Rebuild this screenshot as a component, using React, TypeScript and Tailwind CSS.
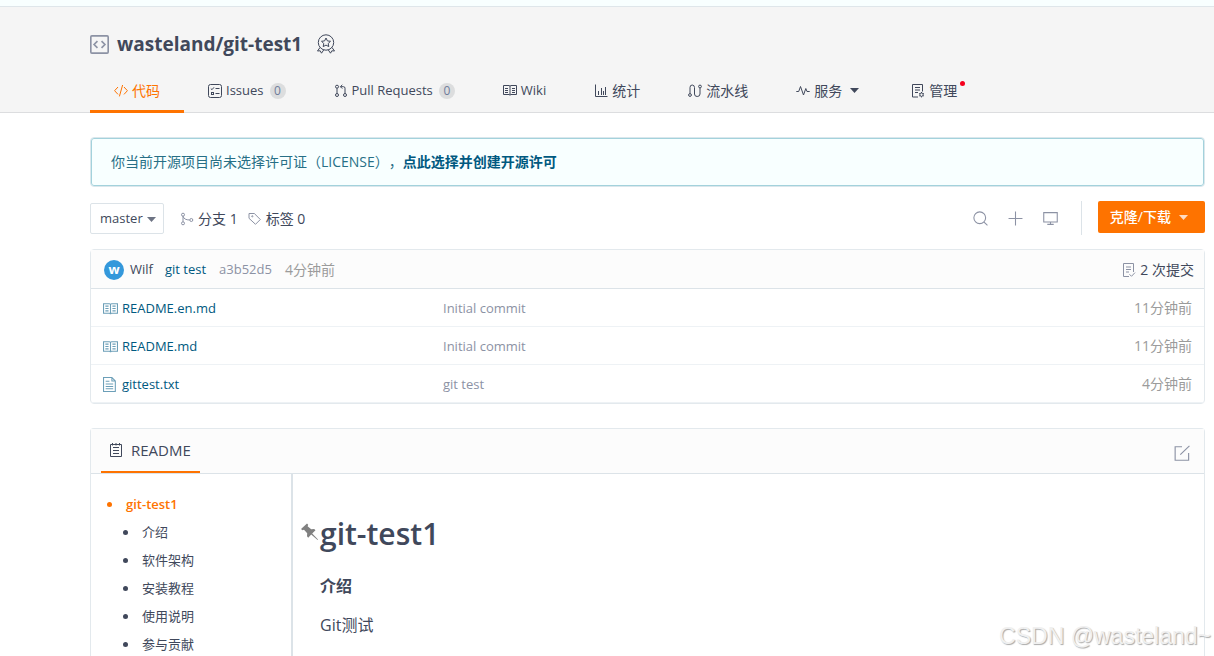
import type { ReactNode } from "react";
import { clsx } from "clsx";

type IconProps = {
  size?: number;
  className?: string;
  children: ReactNode;
};

function Icon({ size = 14, className, children }: IconProps) {
  return (
    <svg
      width={size}
      height={size}
      viewBox="0 0 14 14"
      fill="none"
      stroke="currentColor"
      strokeWidth={1}
      aria-hidden="true"
      className={clsx("shrink-0", className)}
    >
      {children}
    </svg>
  );
}

function Caret({ className }: { className?: string }) {
  return (
    <svg
      width="9"
      height="5"
      viewBox="0 0 9 5"
      fill="currentColor"
      aria-hidden="true"
      className={clsx("shrink-0", className)}
    >
      <path d="M0 0h9L4.5 5z" />
    </svg>
  );
}

const icons = {
  code: (
    <Icon>
      <path d="M4 3L.6 6.7 4 10.4M10 3l3.4 3.7L10 10.4M8.6 1l-3.2 11.4" />
    </Icon>
  ),
  issues: (
    <Icon>
      <rect x=".5" y=".5" width="13" height="13" rx="2" />
      <path d="M2.8 4.5l1.2 1.2 2-2.4M7.5 4.5h4M7.5 9.5h4" />
      <rect x="3.5" y="8.5" width="2" height="2" />
    </Icon>
  ),
  pulls: (
    <Icon>
      <circle cx="3" cy="2.7" r="1.5" />
      <circle cx="3" cy="11" r="1.5" />
      <circle cx="11" cy="11" r="1.5" />
      <path d="M3 4.2v5.3M11 9.5V4.2Q11 2.7 9.5 2.7H6.5M8.3 .8L6.4 2.7l1.9 1.9" />
    </Icon>
  ),
  wiki: (
    <Icon>
      <path d="M.5 1.5H6q1 0 1 1 0-1 1-1h5.5v9H8q-1 0-1 .8 0-.8-1-.8H.5zM7 2.5v8M2 4.5h3M2 6.5h3M2 8.5h3M9 4.5h3M9 6.5h3M9 8.5h3" />
    </Icon>
  ),
  stats: (
    <Icon>
      <path d="M1.5 .5v12H13.5M4.5 7v4M7.5 4v7M9.5 7v4M11.5 3v8" />
    </Icon>
  ),
  pipeline: (
    <Icon>
      <circle cx="2" cy="11" r="1.4" />
      <circle cx="12" cy="2.5" r="1.4" />
      <path d="M2 9.5V3.5Q2 1 4.2 1t2.3 2.5v6.5q0 2.5 2.7 2.5T12 10V4" />
    </Icon>
  ),
  service: (
    <Icon>
      <path d="M.3 7.5h2.4l1.8-5 3 8.5 2.3-6.5L11 7.5h2.7" />
    </Icon>
  ),
  manage: (
    <Icon>
      <path d="M7 13H1.5V.5h10v7M4 3.5h5M4 6h5M4 8.5h3" />
      <circle cx="10.5" cy="10.7" r="1.7" />
      <path d="M10.5 8v1M10.5 12.4v1M8.3 9.4l.9.5M11.9 11.5l.9.5M8.3 12l.9-.5M11.9 9.9l.9-.5" />
    </Icon>
  ),
};

type Tab = {
  label: string;
  icon: ReactNode;
  latin?: boolean;
  count?: number;
  active?: boolean;
  menu?: boolean;
  dot?: boolean;
};

const tabs: Tab[] = [
  { label: "代码", icon: icons.code, active: true },
  { label: "Issues", icon: icons.issues, latin: true, count: 0 },
  { label: "Pull Requests", icon: icons.pulls, latin: true, count: 0 },
  { label: "Wiki", icon: icons.wiki, latin: true },
  { label: "统计", icon: icons.stats },
  { label: "流水线", icon: icons.pipeline },
  { label: "服务", icon: icons.service, menu: true },
  { label: "管理", icon: icons.manage, dot: true },
];

const files = [
  { name: "README.en.md", kind: "book", message: "Initial commit", time: "11分钟前" },
  { name: "README.md", kind: "book", message: "Initial commit", time: "11分钟前" },
  { name: "gittest.txt", kind: "text", message: "git test", time: "4分钟前" },
];

const sections = ["介绍", "软件架构", "安装教程", "使用说明", "参与贡献"];

function TabItem({ tab }: { tab: Tab }) {
  const className = clsx(
    "relative -mb-px flex h-11 items-center gap-1 border-b-3 px-6 pt-0.5",
    tab.latin ? "text-[13px]" : "text-sm",
    tab.active
      ? "border-[#fe7300] text-[#fe7300]"
      : "border-transparent text-[#40485b]"
  );
  const content = (
    <>
      {tab.icon}
      <span>{tab.label}</span>
      {tab.count !== undefined ? (
        <span className="ml-0.5 flex size-4 items-center justify-center rounded-full bg-[#dcddde] text-xs text-[#6f7c9b]">
          {tab.count}
        </span>
      ) : null}
      {tab.menu ? <Caret className="mx-1" /> : null}
      {tab.dot ? (
        <span className="absolute top-3 right-4 size-[5px] rounded-full bg-[#f5001d]" />
      ) : null}
    </>
  );

  if (tab.menu) {
    return (
      <button type="button" className={className}>
        {content}
      </button>
    );
  }

  return (
    <a href="#" className={className}>
      {content}
    </a>
  );
}

function RepoHeader() {
  return (
    <header className="border-t border-b border-t-[#dfe6ea] border-b-[#dcdddf] bg-[#f5f5f5] pt-6 pr-[9px] pl-[90px]">
      <div className="flex h-[26px] items-center gap-2">
        <Icon size={19} className="text-[#8c92a4]">
          <rect x=".6" y=".6" width="12.8" height="12.8" rx=".8" strokeWidth={1.2} />
          <path d="M5.5 4.5L3 7l2.5 2.5M8.5 4.5L11 7 8.5 9.5" strokeWidth={1.2} />
        </Icon>
        <h1 className="text-[19px] font-bold">
          <a href="#">wasteland/git-test1</a>
        </h1>
        <svg
          width="20"
          height="20"
          viewBox="0 0 20 20"
          fill="none"
          stroke="currentColor"
          aria-hidden="true"
          className="ml-[6px]"
        >
          <circle cx="10" cy="8.5" r="7.7" />
          <path d="M10 4l1.4 2.9 3.1.4-2.3 2.2.6 3.1L10 11.1l-2.8 1.5.6-3.1-2.3-2.2 3.1-.4z" />
          <path d="M4 13.5L1.5 17l2.7-.2 1.3 2.4 2.3-3.4M16 13.5l2.5 3.5-2.7-.2-1.3 2.4-2.3-3.4" />
        </svg>
      </div>
      <nav className="mt-3 flex">
        {tabs.map((tab) => (
          <TabItem key={tab.label} tab={tab} />
        ))}
      </nav>
    </header>
  );
}

function LicenseNotice() {
  return (
    <div className="mt-6 flex h-[50px] items-center rounded border border-[#dbe7ec] bg-[#f8ffff] px-5 text-sm text-[#276f86] inset-ring inset-ring-[#a3d2dc]">
      <p className="[text-spacing-trim:space-all]">
        你当前开源项目尚未选择许可证（LICENSE），
        <a href="#" className="font-bold text-[#005980]">
          点此选择并创建开源许可
        </a>
      </p>
    </div>
  );
}

function Toolbar() {
  return (
    <div className="mt-[14px] flex items-start">
      <div className="flex items-center pt-0.5">
        <div className="relative text-[13px]">
          <select
            aria-label="Branch"
            className="block h-[31px] w-[74px] appearance-none rounded-xs border border-[#dce3e8] bg-white pl-[9px]"
          >
            <option>master</option>
          </select>
          <Caret className="pointer-events-none absolute top-[14px] right-2 text-[#6d7383]" />
        </div>
        <a href="#" className="ml-4 flex items-center gap-1 text-sm">
          <Icon className="text-[#8c92a4]">
            <circle cx="3" cy="2.7" r="1.5" />
            <circle cx="3" cy="11.3" r="1.5" />
            <circle cx="11.3" cy="8" r="1.5" />
            <path d="M3 4.2v5.6M3 4.2Q4 8 9.8 8" />
          </Icon>
          分支 1
        </a>
        <a href="#" className="ml-[10px] flex items-center gap-1 text-sm">
          <Icon className="text-[#8c92a4]">
            <path d="M1 1.5h5.3l6 6-4.8 4.8-6.5-6z" />
            <circle cx="4.3" cy="4.3" r=".6" />
          </Icon>
          标签 0
        </a>
      </div>

      <div className="ml-auto flex h-[34px] items-center gap-5 text-[#8c92a4]">
        <button type="button" aria-label="Search">
          <Icon size={15}>
            <circle cx="6.3" cy="6.3" r="5.5" />
            <path d="M10.3 10.3l3.2 3.2" />
          </Icon>
        </button>
        <button type="button" aria-label="Add file">
          <Icon size={15}>
            <path d="M7 .5v13M.5 7h13" />
          </Icon>
        </button>
        <button type="button" aria-label="Open in editor">
          <Icon size={15}>
            <path d="M.7 1.5h12.6v8.7H.7zM7 10.2v2M4 12.5h6" />
          </Icon>
        </button>
      </div>
      <div className="ml-[23px] h-[34px] w-px bg-[#dce3e8]" />
      <button
        type="button"
        className="ml-4 flex h-8 items-center gap-2 rounded-xs bg-[#fe7300] pr-[17px] pl-3 text-sm font-medium text-white"
      >
        克隆/下载
        <Caret className="text-[#ffdcc2]" />
      </button>
    </div>
  );
}

function FileIcon({ kind }: { kind: string }) {
  if (kind === "book") {
    return (
      <Icon size={15} className="text-[#6c9fb8]">
        <path d="M.5 2.5H6q1 0 1 1 0-1 1-1h5.5v9H8q-1 0-1 .8 0-.8-1-.8H.5zM7 3.5v8M2.2 4.8h3M2.2 7h3M2.2 9.2h3M8.8 4.8h3M8.8 7h3M8.8 9.2h3" />
      </Icon>
    );
  }

  return (
    <Icon size={15} className="text-[#6c9fb8]">
      <path d="M.5.5h7.8l3.2 3.2v9.8H.5zM8.3.5v3.2h3.2M2.5 4h3.5M2.5 6.5h7M2.5 8.8h7M2.5 11h7" />
    </Icon>
  );
}

function FileList() {
  return (
    <section className="mt-[14px] rounded border border-[#e3e9ed]">
      <div className="flex h-[39px] items-center border-b border-[#dce3e8] bg-[#fcfcfc] pt-0.5 pr-[10px] pl-[13px] text-[13px]">
        <span className="flex size-5 items-center justify-center rounded-full bg-[#3498db] font-bold text-white">
          w
        </span>
        <a href="#" className="ml-[6px]">
          Wilf
        </a>
        <a href="#" className="ml-3 text-[#005980]">
          git test
        </a>
        <a href="#" className="ml-[13px] text-[#8c92a4]">
          a3b52d5
        </a>
        <span className="ml-[13px] text-sm text-[#9b9b9b]">4分钟前</span>
        <a href="#" className="ml-auto flex items-center gap-1 text-sm">
          <Icon className="text-[#8c92a4]">
            <path d="M7 13.5H1.5V.5h10V9M4 4h5M4 6.5h5M4 9h3M7.5 11.3l2 2 3.5-3.7" />
          </Icon>
          2 次提交
        </a>
      </div>
      <table className="w-full table-fixed border-separate border-spacing-0 text-[13px]">
        <tbody>
          {files.map((file) => (
            <tr key={file.name} className="h-[38px]">
              <td className="w-[352px] border-b border-[#eef2f5] pt-0.5 pl-3">
                <a href="#" className="flex items-center gap-1 text-[#005980]">
                  <FileIcon kind={file.kind} />
                  {file.name}
                </a>
              </td>
              <td className="border-b border-[#eef2f5] pt-0.5 text-[#8c92a4]">
                {file.message}
              </td>
              <td className="w-32 border-b border-[#eef2f5] pr-3 text-right text-sm text-[#9b9b9b]">
                {file.time}
              </td>
            </tr>
          ))}
        </tbody>
      </table>
    </section>
  );
}

function Readme() {
  return (
    <section className="mt-6 flex flex-1 flex-col rounded-t border border-b-0 border-[#e3e9ed]">
      <div className="flex h-[45px] items-stretch border-b border-[#dce3e8] bg-[#fcfcfc] pr-[14px] pl-[10px]">
        <h2 className="flex items-center gap-2 border-b-2 border-[#fe7300] pr-[9px] pl-2 text-[15px]">
          <Icon size={14}>
            <path d="M1.5 1.5h11v12h-11zM4 4.5h6M4 7.5h6M4 10.5h6M3.5 0v2.5M7 0v2.5M10.5 0v2.5" />
          </Icon>
          README
        </h2>
        <button
          type="button"
          aria-label="Edit README"
          className="mt-1 ml-auto text-[#8c92a4]"
        >
          <Icon size={16}>
            <path d="M7 1.5H1v11.8h11.8V7M5.5 8.5L13.5.7" />
          </Icon>
        </button>
      </div>
      <div className="flex flex-1">
        <nav className="w-[202px] border-r-2 border-[#dce3e8] pt-5 text-[13px] leading-5">
          <ul className="pl-4">
            <li className="flex items-center font-semibold text-[#fe7300] before:mr-[14px] before:size-[5px] before:rounded-full before:bg-current">
              <a href="#">git-test1</a>
            </li>
          </ul>
          <ul className="pl-8">
            {sections.map((section) => (
              <li
                key={section}
                className="mt-2 flex items-center before:mr-[14px] before:size-[5px] before:rounded-full before:bg-current"
              >
                <a href="#">{section}</a>
              </li>
            ))}
          </ul>
        </nav>
        <article className="flex-1 pt-9 pl-[27px]">
          <h1 className="relative text-[30px] leading-12 font-semibold">
            <svg
              width="18"
              height="18"
              viewBox="0 0 18 18"
              fill="#808080"
              aria-hidden="true"
              className="absolute top-[13px] -left-[19px]"
            >
              <path d="M6 .5l1.2 1.3-.6 1.4 3.6 3 3-.2 1.3 1.3-3.3 3.2 5.8 6-.4.4-6.4-5.3-3 3.2L6 13.3l.2-3L3 6.8l-1.6.5L0 6z" />
            </svg>
            git-test1
          </h1>
          <h3 className="mt-4 text-base leading-6 font-semibold">介绍</h3>
          <p className="mt-[15px] text-base leading-6">Git测试</p>
        </article>
      </div>
    </section>
  );
}

export default function App() {
  return (
    <div className="relative flex min-h-screen flex-col bg-white font-['Open_Sans','Noto_Sans_CJK_SC',sans-serif] text-[#40485b]">
      <div className="h-[6px] bg-[#f8ffff]" />
      <RepoHeader />
      <main className="flex flex-1 flex-col pr-[9px] pl-[90px]">
        <LicenseNotice />
        <Toolbar />
        <FileList />
        <Readme />
      </main>
      <span className="pointer-events-none absolute right-[3px] bottom-1 font-['Liberation_Sans',sans-serif] text-[23px] leading-8 text-[#f0f0f0] text-shadow-[1px_1px_1px_#aaa]">
        CSDN @wasteland~
      </span>
    </div>
  );
}
